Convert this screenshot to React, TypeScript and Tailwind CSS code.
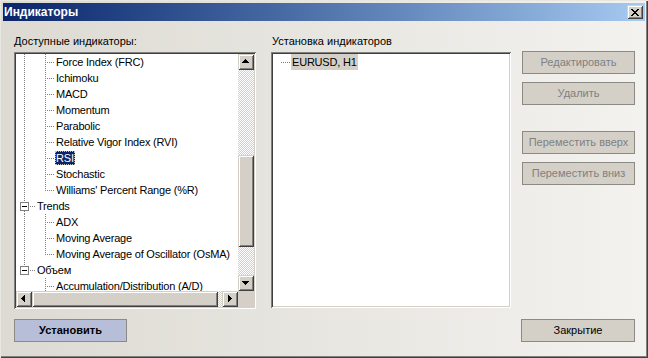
import React from "react";

type Row =
  | { kind: "child"; label: string; last?: boolean; root: boolean; selected?: boolean }
  | { kind: "cat"; label: string; lastRoot: boolean };

const rows: Row[] = [
  { kind: "child", label: "Force Index (FRC)", root: true },
  { kind: "child", label: "Ichimoku", root: true },
  { kind: "child", label: "MACD", root: true },
  { kind: "child", label: "Momentum", root: true },
  { kind: "child", label: "Parabolic", root: true },
  { kind: "child", label: "Relative Vigor Index (RVI)", root: true },
  { kind: "child", label: "RSI", root: true, selected: true },
  { kind: "child", label: "Stochastic", root: true },
  { kind: "child", label: "Williams' Percent Range (%R)", root: true, last: true },
  { kind: "cat", label: "Trends", lastRoot: false },
  { kind: "child", label: "ADX", root: true },
  { kind: "child", label: "Moving Average", root: true },
  { kind: "child", label: "Moving Average of Oscillator (OsMA)", root: true, last: true },
  { kind: "cat", label: "Объем", lastRoot: true },
  { kind: "child", label: "Accumulation/Distribution (A/D)", root: false },
];

const DOT = "#808080";

function ChildGutter({ last, root }: { last?: boolean; root: boolean }) {
  return (
    <svg width="39" height="16" className="shrink-0" shapeRendering="crispEdges">
      {root && <line x1="8.5" y1="0" x2="8.5" y2="16" stroke={DOT} strokeDasharray="1 1" />}
      <line x1="29.5" y1="0" x2="29.5" y2={last ? 9 : 16} stroke={DOT} strokeDasharray="1 1" />
      <line x1="31" y1="8.5" x2="39" y2="8.5" stroke={DOT} strokeDasharray="1 1" />
    </svg>
  );
}

function CatGutter({ lastRoot }: { lastRoot: boolean }) {
  return (
    <svg width="20" height="16" className="shrink-0" shapeRendering="crispEdges">
      <line x1="8.5" y1="0" x2="8.5" y2="4" stroke={DOT} strokeDasharray="1 1" />
      <rect x="4.5" y="4.5" width="8" height="8" fill="#ffffff" stroke="#808080" />
      <line x1="6" y1="8.5" x2="11" y2="8.5" stroke="#000000" />
      {!lastRoot && <line x1="8.5" y1="13" x2="8.5" y2="16" stroke={DOT} strokeDasharray="1 1" />}
      <line x1="14" y1="8.5" x2="20" y2="8.5" stroke={DOT} strokeDasharray="1 1" />
    </svg>
  );
}

const raised =
  "bg-[#d4d0c8] shadow-[inset_1px_1px_0_#d4d0c8,inset_-1px_-1px_0_#404040,inset_2px_2px_0_#ffffff,inset_-2px_-2px_0_#808080]";
const checker =
  "bg-[image:repeating-conic-gradient(#d4d0c8_0%_25%,#ffffff_0%_50%)] bg-[length:2px_2px]";
const sunken =
  "shadow-[inset_1px_1px_0_#808080,inset_-1px_-1px_0_#ffffff,inset_2px_2px_0_#404040,inset_-2px_-2px_0_#d4d0c8] p-[2px] bg-white";

function Arrow({ dir }: { dir: "up" | "down" | "left" | "right" }) {
  const p = {
    up: "M4 9h7v-1h-1v-1h-1v-1h-1v-1h-1v1h-1v1h-1v1h-1z",
    down: "M4 6h7v1h-1v1h-1v1h-1v1h-1v-1h-1v-1h-1v-1h-1z",
    left: "M9 4v7h-1v-1h-1v-1h-1v-1h-1v-1h1v-1h1v-1h1v-1z",
    right: "M6 4v7h1v-1h1v-1h1v-1h1v-1h-1v-1h-1v-1h-1v-1z",
  }[dir];
  return (
    <svg width="16" height="16" shapeRendering="crispEdges">
      <path d={p} fill="#000000" />
    </svg>
  );
}

function SBtn({ dir }: { dir: "up" | "down" | "left" | "right" }) {
  return (
    <div className={`w-[16px] h-[16px] shrink-0 ${raised}`}>
      <Arrow dir={dir} />
    </div>
  );
}

function FlatButton({
  children,
  className = "",
}: {
  children: React.ReactNode;
  className?: string;
}) {
  return (
    <div
      className={`w-[113px] h-[23px] flex items-center justify-center border border-[#8c8a84] text-[11px] ${className}`}
    >
      {children}
    </div>
  );
}

export default function App() {
  return (
    <div
      className="w-[648px] h-[358px] overflow-hidden flex flex-col bg-linear-to-r from-[#dcdad2] to-[#f3f2ef] shadow-[inset_1px_1px_0_#e8e6e0,inset_-1px_-1px_0_#404040,inset_-2px_-2px_0_#808080] text-black"
      style={{ fontFamily: '"Liberation Sans", Arial, sans-serif' }}
    >
      {/* Title bar */}
      <div className="mx-[3px] mt-[3px] h-[18px] flex items-center justify-between bg-linear-to-r from-[#0a246a] to-[#a6caf0]">
        <span className="pl-[1px] text-white font-bold text-[12px] leading-[18px]">Индикаторы</span>
        <div className={`w-[16px] h-[14px] mr-[2px] flex items-center justify-center ${raised}`}>
          <svg width="8" height="7" shapeRendering="crispEdges">
            <path
              d="M0 0h2v1h1v1h2v-1h1v-1h2v1h-1v1h-1v1h-1v1h1v1h1v1h1v1h-2v-1h-1v-1h-2v1h-1v1h-2v-1h1v-1h1v-1h1v-1h-1v-1h-1v-1h-1z"
              fill="#000"
            />
          </svg>
        </div>
      </div>

      {/* Content */}
      <div className="flex pl-[14px] pt-[12px]">
        {/* Left column */}
        <div className="w-[242px] flex flex-col">
          <div className="h-[16px] text-[11px] leading-[16px]">Доступные индикаторы:</div>
          <div className={`mt-[3px] h-[257px] ${sunken} flex flex-col`}>
            <div className="flex flex-1 min-h-0">
              <div className="flex-1 overflow-hidden">
                {rows.map((r, i) =>
                  r.kind === "child" ? (
                    <div key={i} className="flex h-[16px] items-center whitespace-nowrap">
                      <ChildGutter last={r.last} root={r.root} />
                      <span
                        className={`text-[11px] leading-[14px] px-[1px] tracking-[-0.2px] ${
                          r.selected ? "bg-[#0a246a] text-white outline outline-1 outline-dotted outline-[#c0c0c0] -outline-offset-1" : ""
                        }`}
                      >
                        {r.label}
                      </span>
                    </div>
                  ) : (
                    <div key={i} className="flex h-[16px] items-center whitespace-nowrap">
                      <CatGutter lastRoot={r.lastRoot} />
                      <span className="text-[11px] leading-[14px] px-[1px] tracking-[-0.2px]">{r.label}</span>
                    </div>
                  )
                )}
              </div>
              <div className="w-[16px] flex flex-col">
                <SBtn dir="up" />
                <div className={`flex-1 flex flex-col ${checker}`}>
                  <div className="h-[85px]" />
                  <div className={`h-[92px] ${raised}`} />
                </div>
                <SBtn dir="down" />
              </div>
            </div>
            <div className="h-[16px] flex">
              <SBtn dir="left" />
              <div className={`flex-1 flex ${checker}`}>
                <div className={`w-[186px] ${raised}`} />
              </div>
              <SBtn dir="right" />
              <div className="w-[16px] bg-[#d4d0c8]" />
            </div>
          </div>
        </div>

        {/* Middle column */}
        <div className="w-[240px] ml-[15px] flex flex-col">
          <div className="h-[16px] text-[11px] leading-[16px] pl-[1px]">Установка индикаторов</div>
          <div className={`mt-[3px] h-[256px] ${sunken}`}>
            <div className="flex h-[16px] items-center whitespace-nowrap">
              <svg width="18" height="16" className="shrink-0" shapeRendering="crispEdges">
                <line x1="8" y1="8.5" x2="17" y2="8.5" stroke={DOT} strokeDasharray="1 1" />
              </svg>
              <span className="text-[11px] leading-[16px] px-[1px] bg-[#d4d0c8] tracking-[-0.2px]">EURUSD, H1</span>
            </div>
          </div>
        </div>

        {/* Right column */}
        <div className="ml-[11px] pt-[18px] flex flex-col">
          <FlatButton className="bg-[#d4d0c8] text-[#808080] h-[22px]">Редактировать</FlatButton>
          <FlatButton className="mt-[8px] bg-[#d4d0c8] text-[#808080] h-[22px]">Удалить</FlatButton>
          <FlatButton className="mt-[26px] bg-[#d4d0c8] text-[#808080]">Переместить вверх</FlatButton>
          <FlatButton className="mt-[8px] bg-[#d4d0c8] text-[#808080] h-[22px]">Переместить вниз</FlatButton>
        </div>
      </div>

      {/* Bottom buttons */}
      <div className="flex justify-between pl-[14px] pr-[13px] mt-[10px]">
        <FlatButton className="bg-[#b6bed8] font-bold">Установить</FlatButton>
        <FlatButton className="bg-[#d4d0c8] w-[114px]">Закрытие</FlatButton>
      </div>
    </div>
  );
}
